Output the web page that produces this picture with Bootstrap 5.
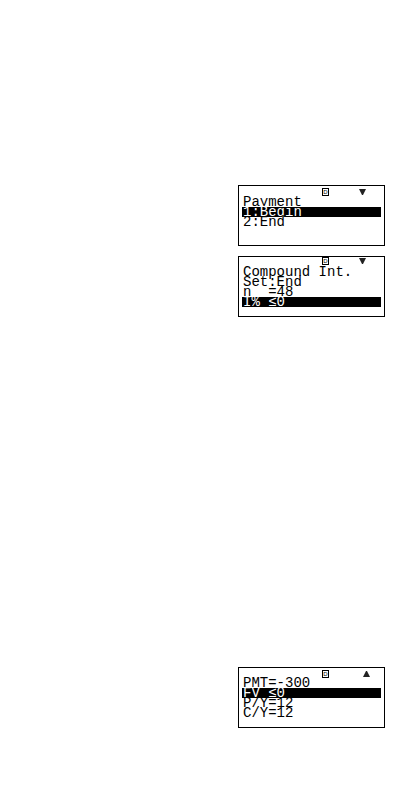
<!DOCTYPE html>
<html lang="en">
<head>
<meta charset="utf-8">
<meta name="viewport" content="width=device-width, initial-scale=1">
<title>Compound interest screens</title>
<link href="https://cdn.jsdelivr.net/npm/bootstrap@5.3.0/dist/css/bootstrap.min.css" rel="stylesheet">
<style>
body { background: #fff; color: #000; }
.screens { padding: 185px 35px 66px; gap: 10px; }
.later { margin-top: 340px; }
.lcd { width: 147px; min-height: 61px; border: 1px solid #000; padding: 0 3px 9px; font: 14px/10px "Liberation Mono", monospace; }
.lcd-status { height: 10px; padding: 0 15px 0 80px; }
.lcd-first { height: 11px; }
.up-end { padding-right: 11px; }
.lcd-row { height: 10px; padding-left: 1px; white-space: pre; }
.lcd-on { background: #000; color: #fff; }
.lcd-mode { width: 7px; height: 8px; border: 1px solid #000; font: 6px/6px "Liberation Sans", sans-serif; }
</style>
<script src="https://cdn.jsdelivr.net/npm/bootstrap@5.3.0/dist/js/bootstrap.bundle.min.js"></script>
</head>
<body>
<main class="screens d-flex flex-column align-items-end">
  <section class="lcd" aria-label="Payment">
    <div class="lcd-status lcd-first d-flex justify-content-between align-items-center"><span class="lcd-mode d-flex justify-content-center">D</span><svg width="7" height="8" viewBox="0 0 7 8" fill="#222" aria-hidden="true"><path d="M0 1H7L4 7H3Z"/></svg></div>
    <div class="lcd-row">Payment</div>
    <div class="lcd-row lcd-on">1:Begin</div>
    <div class="lcd-row">2:End</div>
  </section>
  <section class="lcd" aria-label="Compound interest">
    <div class="lcd-status d-flex justify-content-between align-items-start"><span class="lcd-mode d-flex justify-content-center">D</span><svg width="7" height="8" viewBox="0 0 7 8" fill="#222" aria-hidden="true"><path d="M0 1H7L4 7H3Z"/></svg></div>
    <div class="lcd-row">Compound Int.</div>
    <div class="lcd-row">Set:End</div>
    <div class="lcd-row">n  =48</div>
    <div class="lcd-row lcd-on">I% ≤0</div>
  </section>
  <section class="lcd later" aria-label="Payment values">
    <div class="lcd-status up-end d-flex justify-content-between align-items-end"><span class="lcd-mode d-flex justify-content-center">D</span><svg width="7" height="8" viewBox="0 0 7 8" fill="#222" aria-hidden="true"><path d="M0 7H7L4 1H3Z"/></svg></div>
    <div class="lcd-row">PMT=-300</div>
    <div class="lcd-row lcd-on">FV ≤0</div>
    <div class="lcd-row">P/Y=12</div>
    <div class="lcd-row">C/Y=12</div>
  </section>
</main>
</body>
</html>
